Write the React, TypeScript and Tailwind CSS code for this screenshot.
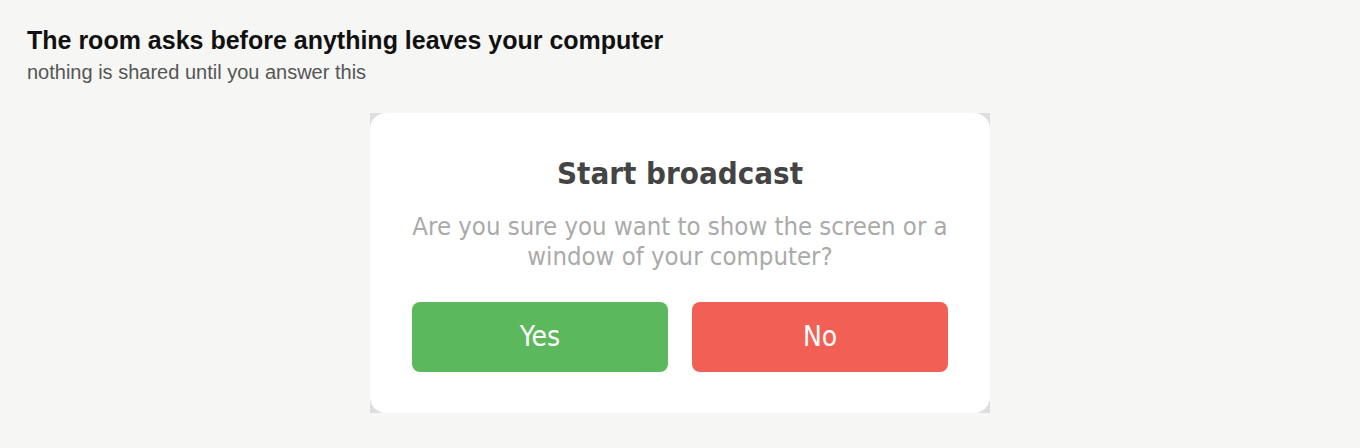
export default function App() {
  return (
    <div className="min-h-[448px] w-full bg-[#f6f6f4] px-[27px] pt-[25px] font-['Liberation_Sans',Arial,sans-serif]">
      <h1 className="text-[25px] font-bold leading-[30px] text-[#111]">
        The room asks before anything leaves your computer
      </h1>
      <p className="mt-[5px] text-[20px] leading-[24px] text-[#555]">nothing is shared until you answer this</p>

      <div className="mt-[29px] flex justify-center">
        <div className="w-[620px] bg-[#dedede]">
          <div className="flex h-[300px] flex-col items-center rounded-[16px] bg-white px-[42px] pt-[41px] font-['DejaVu_Sans',Tahoma,sans-serif] [font-stretch:condensed]">
            <h2 className="text-[31px] font-bold leading-[38px] text-[#444]">Start broadcast</h2>
            <p className="mt-[19px] text-center text-[25.5px] leading-[30px] text-[#aaa]">
              Are you sure you want to show the screen or a window of your computer?
            </p>
            <div className="mt-[31px] grid w-full grid-cols-2 gap-[24px]">
              <button className="h-[70px] rounded-[8px] bg-[#5cb85c] text-[28px] text-white">Yes</button>
              <button className="h-[70px] rounded-[8px] bg-[#f25f55] text-[28px] text-white">No</button>
            </div>
          </div>
        </div>
      </div>
    </div>
  )
}
